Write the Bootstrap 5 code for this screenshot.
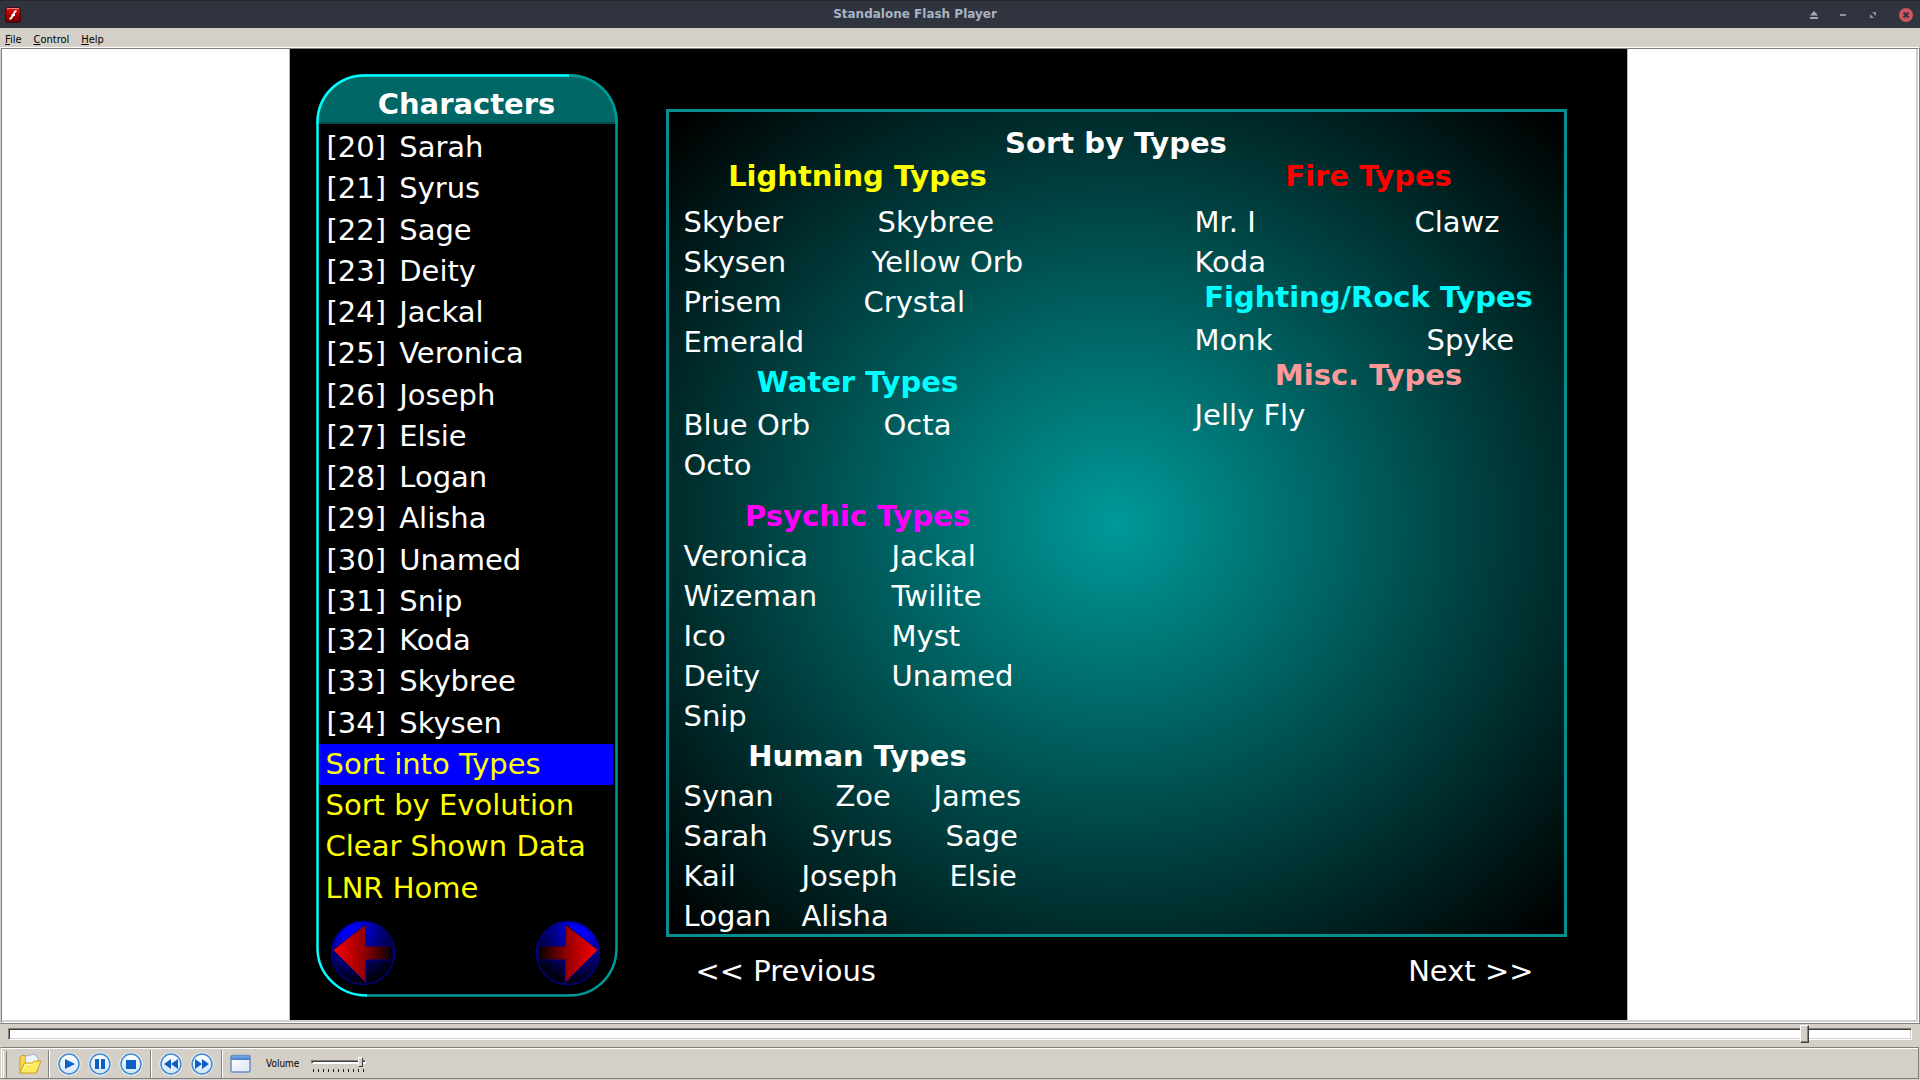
<!DOCTYPE html>
<html lang="en">
<head>
<meta charset="utf-8">
<meta name="viewport" content="width=device-width, initial-scale=1">
<title>Standalone Flash Player</title>
<link href="https://cdn.jsdelivr.net/npm/bootstrap@5.3.0/dist/css/bootstrap.min.css" rel="stylesheet">
<style>
  :root { --face: #d4d0c8; }
  body { background: var(--face); font-family: "DejaVu Sans", Verdana, sans-serif; color: #000; }
  a { color: inherit; text-decoration: none; }

  /* window chrome */
  .titlebar { height: 28px; background: #2f343f; border-top: 1px solid #232730; color: #a9b3c4; font-size: 12px; font-weight: 700; padding: 0 7px 0 5px; }
  .titlebar button, .transport button { background: none; border: 0; padding: 0; line-height: 0; display: block; }
  .titlebar-text { padding-bottom: 2px; }
  .window-controls { gap: 20px; }
  .menubar { height: 19px; font: 11px/24px "DejaVu Sans Condensed", "Liberation Sans", sans-serif; padding-left: 5px; gap: 12px; }
  .menubar a::first-letter { text-decoration: underline; }
  .viewport { border: 1px solid #fff; border-right-color: #808080; border-bottom-color: #808080; border-left-color: var(--face); }
  .viewport-inner { border: 1px solid #808080; border-right-color: #fff; border-bottom-color: #fff; }
  .canvas-area { background: #fff; border-right: 2px solid #cfcfcf; border-bottom: 2px solid #cfcfcf; padding-right: 2px; }

  /* movie */
  .stage { max-width: 1339px; background: #000; color: #fff; font-size: 29px; border: 0 solid #b4b4b4; border-width: 0 1px; padding: 25px 60px 0 26px; gap: 48px; white-space: nowrap; }
  .roster { width: 302px; margin-bottom: 23px; }
  .roster-outline { inset: 0; width: 100%; height: 100%; pointer-events: none; overflow: visible; }
  .roster-title { height: 50px; background: #006666; border-bottom: 2px solid #004a4a; border-radius: 48px 48px 0 0; font-size: 29px; font-weight: 700; line-height: 40px; padding-top: 10px; }
  .roster-group { padding: 0 5px 0 3px; }
  .roster-group a { flex: 1 1 0; line-height: 41px; padding-left: 7px; border-radius: 1px; }
  .roster-group a span { margin: 0 4px 0 1px; }
  .roster-upper { height: 495px; margin: 3px 0 -2px; }
  .roster-lower { height: 289px; }
  .roster-command { color: #ff0; }
  .roster-command.active { background: #00f; }
  .roster-pager { padding: 11px 17px 0 14px; }
  .roster-pager button { background: none; border: 0; padding: 0; line-height: 0; }

  .sheet-side { padding-top: 35px; }
  .sheet { border: 3px solid #008e8e; padding-top: 11px; background: radial-gradient(ellipse farthest-corner at 50% 50%, #009999, #000 98%); line-height: 40px; min-height: 0; }
  .sheet h1, .sheet h2 { font-size: 29px; font-weight: 700; line-height: 40px; margin: 0; text-align: center; }
  .sheet .sheet-title { margin-bottom: -7px; }
  .type-cols { padding: 0 21px 0 15px; margin-bottom: -6px; }
  .type-col { width: 348px; }
  .sheet .space-lg { margin-bottom: 6px; }
  .sheet .space-sm { margin-bottom: 3px; }
  .sheet .pull { margin-top: -5px; }
  .sheet .push { margin-top: 11px; }
  .type-col ul { list-style: none; padding: 0; margin: 0; }
  .type-col li { display: flex; }
  .c118 { width: 118px; } .c128 { width: 128px; } .c152 { width: 152px; } .c98 { width: 98px; }
  .c134 { width: 134px; } .c148 { width: 148px; } .c180 { width: 180px; } .c188 { width: 188px; }
  .c194 { width: 194px; } .c200 { width: 200px; } .c208 { width: 208px; } .c220 { width: 220px; } .c232 { width: 232px; }
  .c-magenta { color: #f0f; } .c-cyan { color: #0ff; } .c-yellow { color: #ff0; } .c-red { color: #f00; } .c-pink { color: #f99; }
  .sheet-nav { line-height: 40px; margin: 14px 0 29px; padding: 0 33px 0 30px; }

  /* seek bar */
  input[type=range] { appearance: none; -webkit-appearance: none; margin: 0; background: none; display: block; }
  .seek { height: 23px; padding: 1px 8px 0; }
  .seek input { width: 100%; height: 18px; }
  .seek input::-webkit-slider-runnable-track { height: 12px; background: #fff; border: 1px solid #808080; border-right-color: #fff; border-bottom-color: #fff; box-shadow: inset 1px 1px #404040, inset -1px -1px var(--face); }
  .seek input::-webkit-slider-thumb { -webkit-appearance: none; width: 9px; height: 18px; margin-top: -4px; background: var(--face); border: 1px solid #fff; border-right-color: #404040; border-bottom-color: #404040; box-shadow: inset -1px -1px #808080; }

  /* transport */
  .transport { height: 32px; border: 1px solid #808080; border-left-color: var(--face); box-shadow: inset 1px 1px #fff; margin: 0 1px 1px 0; padding: 2px 0 0 2px; font: 10px/20px "DejaVu Sans Condensed", "Liberation Sans", sans-serif; }
  .grip { width: 4px; height: 27px; border: 1px solid #808080; border-width: 0 1px 0 0; background: linear-gradient(90deg, #fff 1px, var(--face) 1px); margin-right: 11px; }
  .divider { width: 2px; height: 28px; background: linear-gradient(90deg, #808080 1px, #fff 1px); }
  .open-file { margin-right: 6px; }
  .round-set { gap: 7px; padding: 0 7px; }
  .volume { width: 55px; margin-left: 12px; }
  .volume input { width: 55px; height: 10px; }
  .volume input::-webkit-slider-runnable-track { height: 4px; background: #fff; border: 1px solid #808080; border-right-color: #fff; border-bottom-color: #fff; box-shadow: inset 1px 1px #404040; }
  .volume input::-webkit-slider-thumb { -webkit-appearance: none; width: 5px; height: 10px; margin-top: -4px; background: var(--face); border: 1px solid #fff; border-right-color: #404040; border-bottom-color: #404040; }
  .volume-ticks { height: 3px; margin: 2px 0 0 2px; background: repeating-linear-gradient(90deg, #222 0 1px, transparent 1px 5px); }
</style>
<script src="https://cdn.jsdelivr.net/npm/bootstrap@5.3.0/dist/js/bootstrap.bundle.min.js"></script>
</head>
<body class="d-flex flex-column vh-100 overflow-hidden">

<header class="titlebar d-flex align-items-center flex-shrink-0">
  <svg class="d-block" width="16" height="16" viewBox="0 0 16 16"><defs><linearGradient id="fl" x2="0" y2="1"><stop stop-color="#e02020"/><stop offset=".4" stop-color="#b80000"/><stop offset="1" stop-color="#640000"/></linearGradient></defs><rect x=".5" y=".5" width="15" height="15" rx="2.500" fill="url(#fl)" stroke="#3a0a0c"/><path d="M2 1.500h12" stroke="#f08080"/><path d="M11.500 4C8 4 8.500 11.500 4.500 12M6.500 8H10" fill="none" stroke="#fff" stroke-width="1.800"/></svg>
  <span class="titlebar-text flex-grow-1 text-center">Standalone Flash Player</span>
  <div class="window-controls d-flex align-items-center">
    <button type="button" aria-label="Shade"><svg width="10" height="14" viewBox="2 0 10 14" fill="#a4abb8"><path d="M7 3l4 4.500H3zM3 9h8v2H3z"/></svg></button>
    <button type="button" aria-label="Minimize"><svg width="8" height="14" viewBox="0 0 8 14" fill="#8c93a0"><path d="M1 6h6v2H1z"/></svg></button>
    <button type="button" aria-label="Maximize"><svg width="12" height="14" viewBox="0 0 12 14" fill="#8c93a0"><path d="M5 4h4v4zM3 6l4 4H3z"/></svg></button>
    <button type="button" aria-label="Close"><svg width="14" height="14" viewBox="0 0 14 14"><circle cx="7" cy="7" r="7" fill="#cc575d"/><path d="M4.500 4.500l5 5M9.500 4.500l-5 5" stroke="#2f343f" stroke-width="2"/></svg></button>
  </div>
</header>

<nav class="menubar d-flex flex-shrink-0">
  <a href="#" class="d-block">File</a><a href="#" class="d-block">Control</a><a href="#" class="d-block">Help</a>
</nav>

<main class="viewport d-flex flex-grow-1">
  <div class="viewport-inner d-flex flex-grow-1">
    <div class="canvas-area d-flex flex-grow-1 justify-content-center">
      <div class="stage d-flex w-100">

        <aside class="roster position-relative d-flex flex-column flex-shrink-0">
          <h2 class="roster-title text-center m-0 flex-shrink-0">Characters</h2>
          <div class="roster-group roster-upper d-flex flex-column">
            <a href="#"><span>[20]</span> Sarah</a>
            <a href="#"><span>[21]</span> Syrus</a>
            <a href="#"><span>[22]</span> Sage</a>
            <a href="#"><span>[23]</span> Deity</a>
            <a href="#"><span>[24]</span> Jackal</a>
            <a href="#"><span>[25]</span> Veronica</a>
            <a href="#"><span>[26]</span> Joseph</a>
            <a href="#"><span>[27]</span> Elsie</a>
            <a href="#"><span>[28]</span> Logan</a>
            <a href="#"><span>[29]</span> Alisha</a>
            <a href="#"><span>[30]</span> Unamed</a>
            <a href="#"><span>[31]</span> Snip</a>
          </div>
          <div class="roster-group roster-lower d-flex flex-column">
            <a href="#"><span>[32]</span> Koda</a>
            <a href="#"><span>[33]</span> Skybree</a>
            <a href="#"><span>[34]</span> Skysen</a>
            <a href="#" class="roster-command active">Sort into Types</a>
            <a href="#" class="roster-command">Sort by Evolution</a>
            <a href="#" class="roster-command">Clear Shown Data</a>
            <a href="#" class="roster-command">LNR Home</a>
          </div>
          <div class="roster-pager d-flex justify-content-between">
            <button type="button" aria-label="Back"><svg width="66" height="66" viewBox="0 0 66 66"><defs>
              <radialGradient id="orb" cx=".3" cy=".12" r=".85"><stop stop-color="#0000ff"/><stop offset=".25" stop-color="#0000e0"/><stop offset=".45" stop-color="#000099"/><stop offset="1" stop-color="#000010"/></radialGradient>
              <linearGradient id="arw"><stop stop-color="#ff0000"/><stop offset=".5" stop-color="#990000"/><stop offset="1" stop-color="#000"/></linearGradient></defs>
              <g id="orbArrow"><circle cx="33" cy="33" r="31.500" fill="url(#orb)" stroke="#000088" stroke-width="1.500"/><path d="M3 30L36 4V26H63V40H36V63Z" fill="url(#arw)" stroke="#000080" stroke-width="1"/></g></svg></button>
            <button type="button" aria-label="Forward"><svg width="66" height="66" viewBox="0 0 66 66"><use href="#orbArrow" transform="matrix(-1 0 0 1 66 0)"/></svg></button>
          </div>
          <svg class="roster-outline position-absolute" viewBox="0 0 302 923" preserveAspectRatio="none" fill="none" stroke-width="2.500">
            <path d="M253 1.500C280 1.500 300.500 22 300.500 49V874C300.500 901 280 921.500 253 921.500H50" stroke="#009999"/>
            <path d="M253 1.500H49C22 1.500 1.500 22 1.500 49V874C1.500 901 24 921.500 51 921.500" stroke="#00ffff"/>
          </svg>
        </aside>

        <section class="sheet-side d-flex flex-column flex-grow-1">
          <div class="sheet flex-grow-1">
            <h1 class="sheet-title">Sort by Types</h1>
            <div class="type-cols d-flex justify-content-between">
              <div class="type-col">
                <h2 class="c-yellow space-lg">Lightning Types</h2>
                <ul>
                  <li><span class="c194">Skyber</span><span>Skybree</span></li>
                  <li><span class="c188">Skysen</span><span>Yellow Orb</span></li>
                  <li><span class="c180">Prisem</span><span>Crystal</span></li>
                  <li><span>Emerald</span></li>
                </ul>
                <h2 class="c-cyan space-sm">Water Types</h2>
                <ul>
                  <li><span class="c200">Blue Orb</span><span>Octa</span></li>
                  <li><span>Octo</span></li>
                </ul>
                <h2 class="c-magenta push">Psychic Types</h2>
                <ul>
                  <li><span class="c208">Veronica</span><span>Jackal</span></li>
                  <li><span class="c208">Wizeman</span><span>Twilite</span></li>
                  <li><span class="c208">Ico</span><span>Myst</span></li>
                  <li><span class="c208">Deity</span><span>Unamed</span></li>
                  <li><span>Snip</span></li>
                </ul>
                <h2>Human Types</h2>
                <ul>
                  <li><span class="c152">Synan</span><span class="c98">Zoe</span><span>James</span></li>
                  <li><span class="c128">Sarah</span><span class="c134">Syrus</span><span>Sage</span></li>
                  <li><span class="c118">Kail</span><span class="c148">Joseph</span><span>Elsie</span></li>
                  <li><span class="c118">Logan</span><span>Alisha</span></li>
                </ul>
              </div>
              <div class="type-col">
                <h2 class="c-red space-lg">Fire Types</h2>
                <ul>
                  <li><span class="c220">Mr. I</span><span>Clawz</span></li>
                  <li><span>Koda</span></li>
                </ul>
                <h2 class="c-cyan space-sm pull">Fighting/Rock Types</h2>
                <ul>
                  <li><span class="c232">Monk</span><span>Spyke</span></li>
                </ul>
                <h2 class="c-pink pull">Misc. Types</h2>
                <ul>
                  <li><span>Jelly Fly</span></li>
                </ul>
              </div>
            </div>
          </div>
          <nav class="sheet-nav d-flex justify-content-between">
            <a href="#">&lt;&lt; Previous</a>
            <a href="#">Next &gt;&gt;</a>
          </nav>
        </section>

      </div>
    </div>
  </div>
</main>

<div class="seek flex-shrink-0"><input type="range" min="0" max="1000" value="946" aria-label="Seek"></div>

<footer class="transport d-flex align-items-center flex-shrink-0">
  <span class="grip"></span>
  <button type="button" aria-label="Open" class="open-file"><svg width="24" height="22" viewBox="0 0 24 22"><path d="M2 20V4l2-1.500h4L10 5h9v14z" fill="#f5d94a" stroke="#c9a21c"/><path d="M7 3.500L16 1l4 4v8H8z" fill="#eef4fb" stroke="#9fb4cc"/><path d="M2 20L6.500 10H14l2-2h7l-5 12z" fill="#ffe95c" stroke="#caa41e"/><path d="M4.500 18l3-6.500H14" stroke="#fffbc0" fill="none"/></svg></button>
  <span class="divider"></span>
  <div class="round-set d-flex">
    <button type="button" aria-label="Play"><svg width="24" height="24" viewBox="0 0 24 24"><defs><linearGradient id="rb" x2="0" y2="1"><stop stop-color="#fff"/><stop offset="1" stop-color="#cfe6fa"/></linearGradient></defs><g id="rbtn"><circle cx="12" cy="12" r="11.500" fill="#f4f8fc"/><circle cx="12" cy="12" r="10" fill="url(#rb)" stroke="#3f87cf" stroke-width="1.500"/></g><path d="M8 7l10 5-10 5z" fill="#0d5fc4"/></svg></button>
    <button type="button" aria-label="Pause"><svg width="24" height="24" viewBox="0 0 24 24"><use href="#rbtn"/><path d="M7 7h4v10H7zM13 7h4v10h-4z" fill="#0d5fc4"/></svg></button>
    <button type="button" aria-label="Stop"><svg width="24" height="24" viewBox="0 0 24 24"><use href="#rbtn"/><path d="M7 8h10v9H7z" fill="#0d5fc4"/></svg></button>
  </div>
  <span class="divider"></span>
  <div class="round-set d-flex">
    <button type="button" aria-label="Rewind"><svg width="24" height="24" viewBox="0 0 24 24"><use href="#rbtn"/><path d="M12 7v10l-7-5zM19 7v10l-7-5z" fill="#0d5fc4"/></svg></button>
    <button type="button" aria-label="Fast forward"><svg width="24" height="24" viewBox="0 0 24 24"><use href="#rbtn"/><path d="M5 7v10l7-5zM12 7v10l7-5z" fill="#0d5fc4"/></svg></button>
  </div>
  <span class="divider"></span>
  <div class="round-set d-flex">
    <button type="button" aria-label="Playlist"><svg width="21" height="20" viewBox="0 0 21 20"><defs><linearGradient id="pg" x2="1" y2="1"><stop stop-color="#fff"/><stop offset="1" stop-color="#dfe6f2"/></linearGradient></defs><rect x="1" y="1.500" width="19" height="16.500" rx="1.500" fill="url(#pg)" stroke="#6a8fc4" stroke-width="1.500"/><path d="M1 2h19v4H1z" fill="#4f86d0"/><path d="M2 3h17" stroke="#8db5ea"/></svg></button>
  </div>
  <label for="vol" class="ms-2">Volume</label>
  <div class="volume"><input id="vol" type="range" min="0" max="100" value="96"><div class="volume-ticks"></div></div>
</footer>

</body>
</html>
